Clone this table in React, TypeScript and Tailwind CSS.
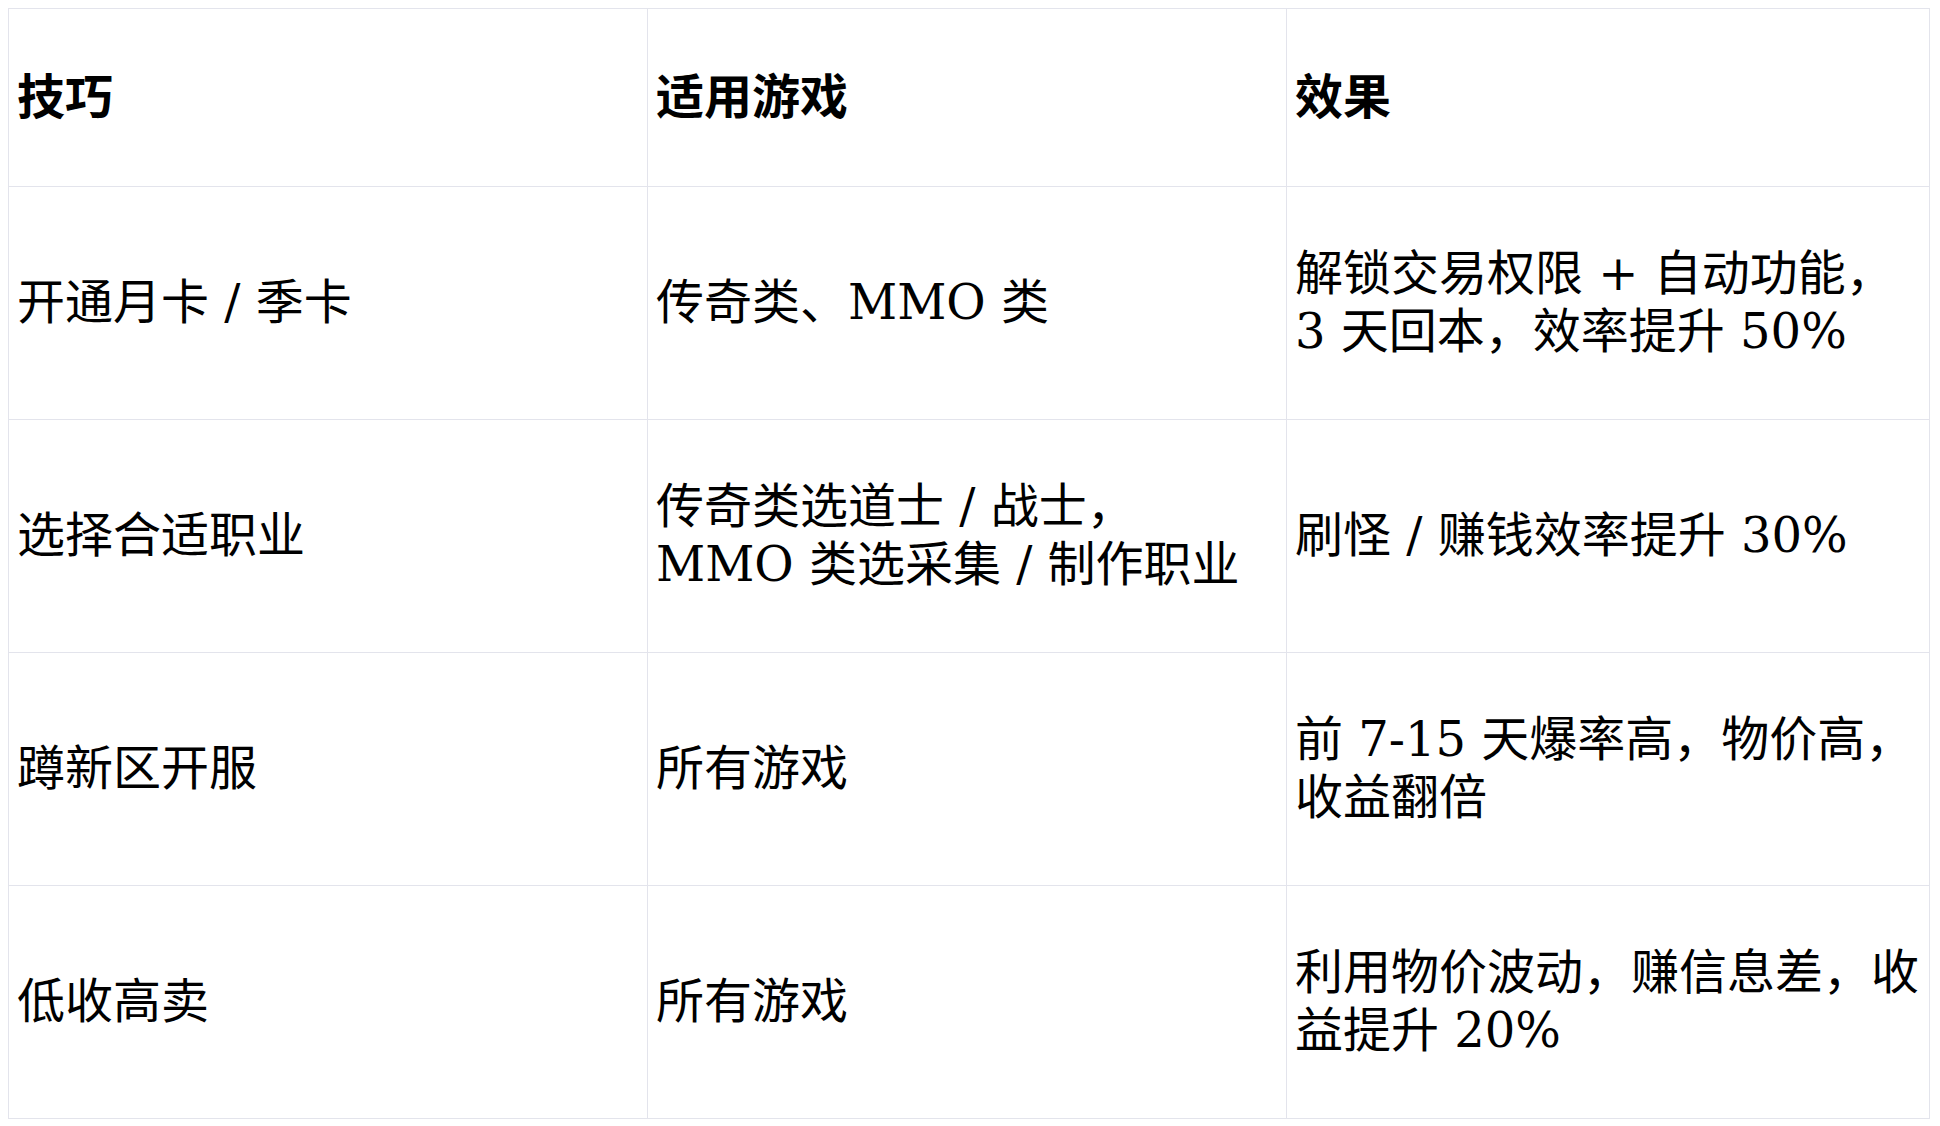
import React from "react";

const rows: { a: string[]; b: string[]; c: string[] }[] = [
  { a: ["开通月卡 / 季卡"], b: ["传奇类、MMO 类"], c: ["解锁交易权限 + 自动功能，", "3 天回本，效率提升 50%"] },
  { a: ["选择合适职业"], b: ["传奇类选道士 / 战士，", "MMO 类选采集 / 制作职业"], c: ["刷怪 / 赚钱效率提升 30%"] },
  { a: ["蹲新区开服"], b: ["所有游戏"], c: ["前 7-15 天爆率高，物价高，", "收益翻倍"] },
  { a: ["低收高卖"], b: ["所有游戏"], c: ["利用物价波动，赚信息差，收", "益提升 20%"] },
];

function Lines({ lines }: { lines: string[] }) {
  return (
    <>
      {lines.map((l, i) => (
        <div key={i} className="whitespace-nowrap">
          {l}
        </div>
      ))}
    </>
  );
}

export default function App() {
  return (
    <div
      className="bg-white p-2 text-black"
      style={{ fontFamily: '"DejaVu Serif", "Noto Sans CJK SC", serif' }}
    >
      <table className="table-fixed border-collapse w-[1921px] text-[48px] leading-[1.2]">
        <colgroup>
          <col className="w-[639px]" />
          <col className="w-[639px]" />
          <col className="w-[643px]" />
        </colgroup>
        <thead>
          <tr>
            {["技巧", "适用游戏", "效果"].map((h) => (
              <th
                key={h}
                className="h-[178px] border border-[#e3e4ec] px-2 text-left align-middle font-bold"
              >
                {h}
              </th>
            ))}
          </tr>
        </thead>
        <tbody>
          {rows.map((r, i) => (
            <tr key={i}>
              {[r.a, r.b, r.c].map((cell, j) => (
                <td
                  key={j}
                  className="h-[233px] border border-[#e3e4ec] px-2 text-left align-middle font-normal"
                >
                  <Lines lines={cell} />
                </td>
              ))}
            </tr>
          ))}
        </tbody>
      </table>
    </div>
  );
}
